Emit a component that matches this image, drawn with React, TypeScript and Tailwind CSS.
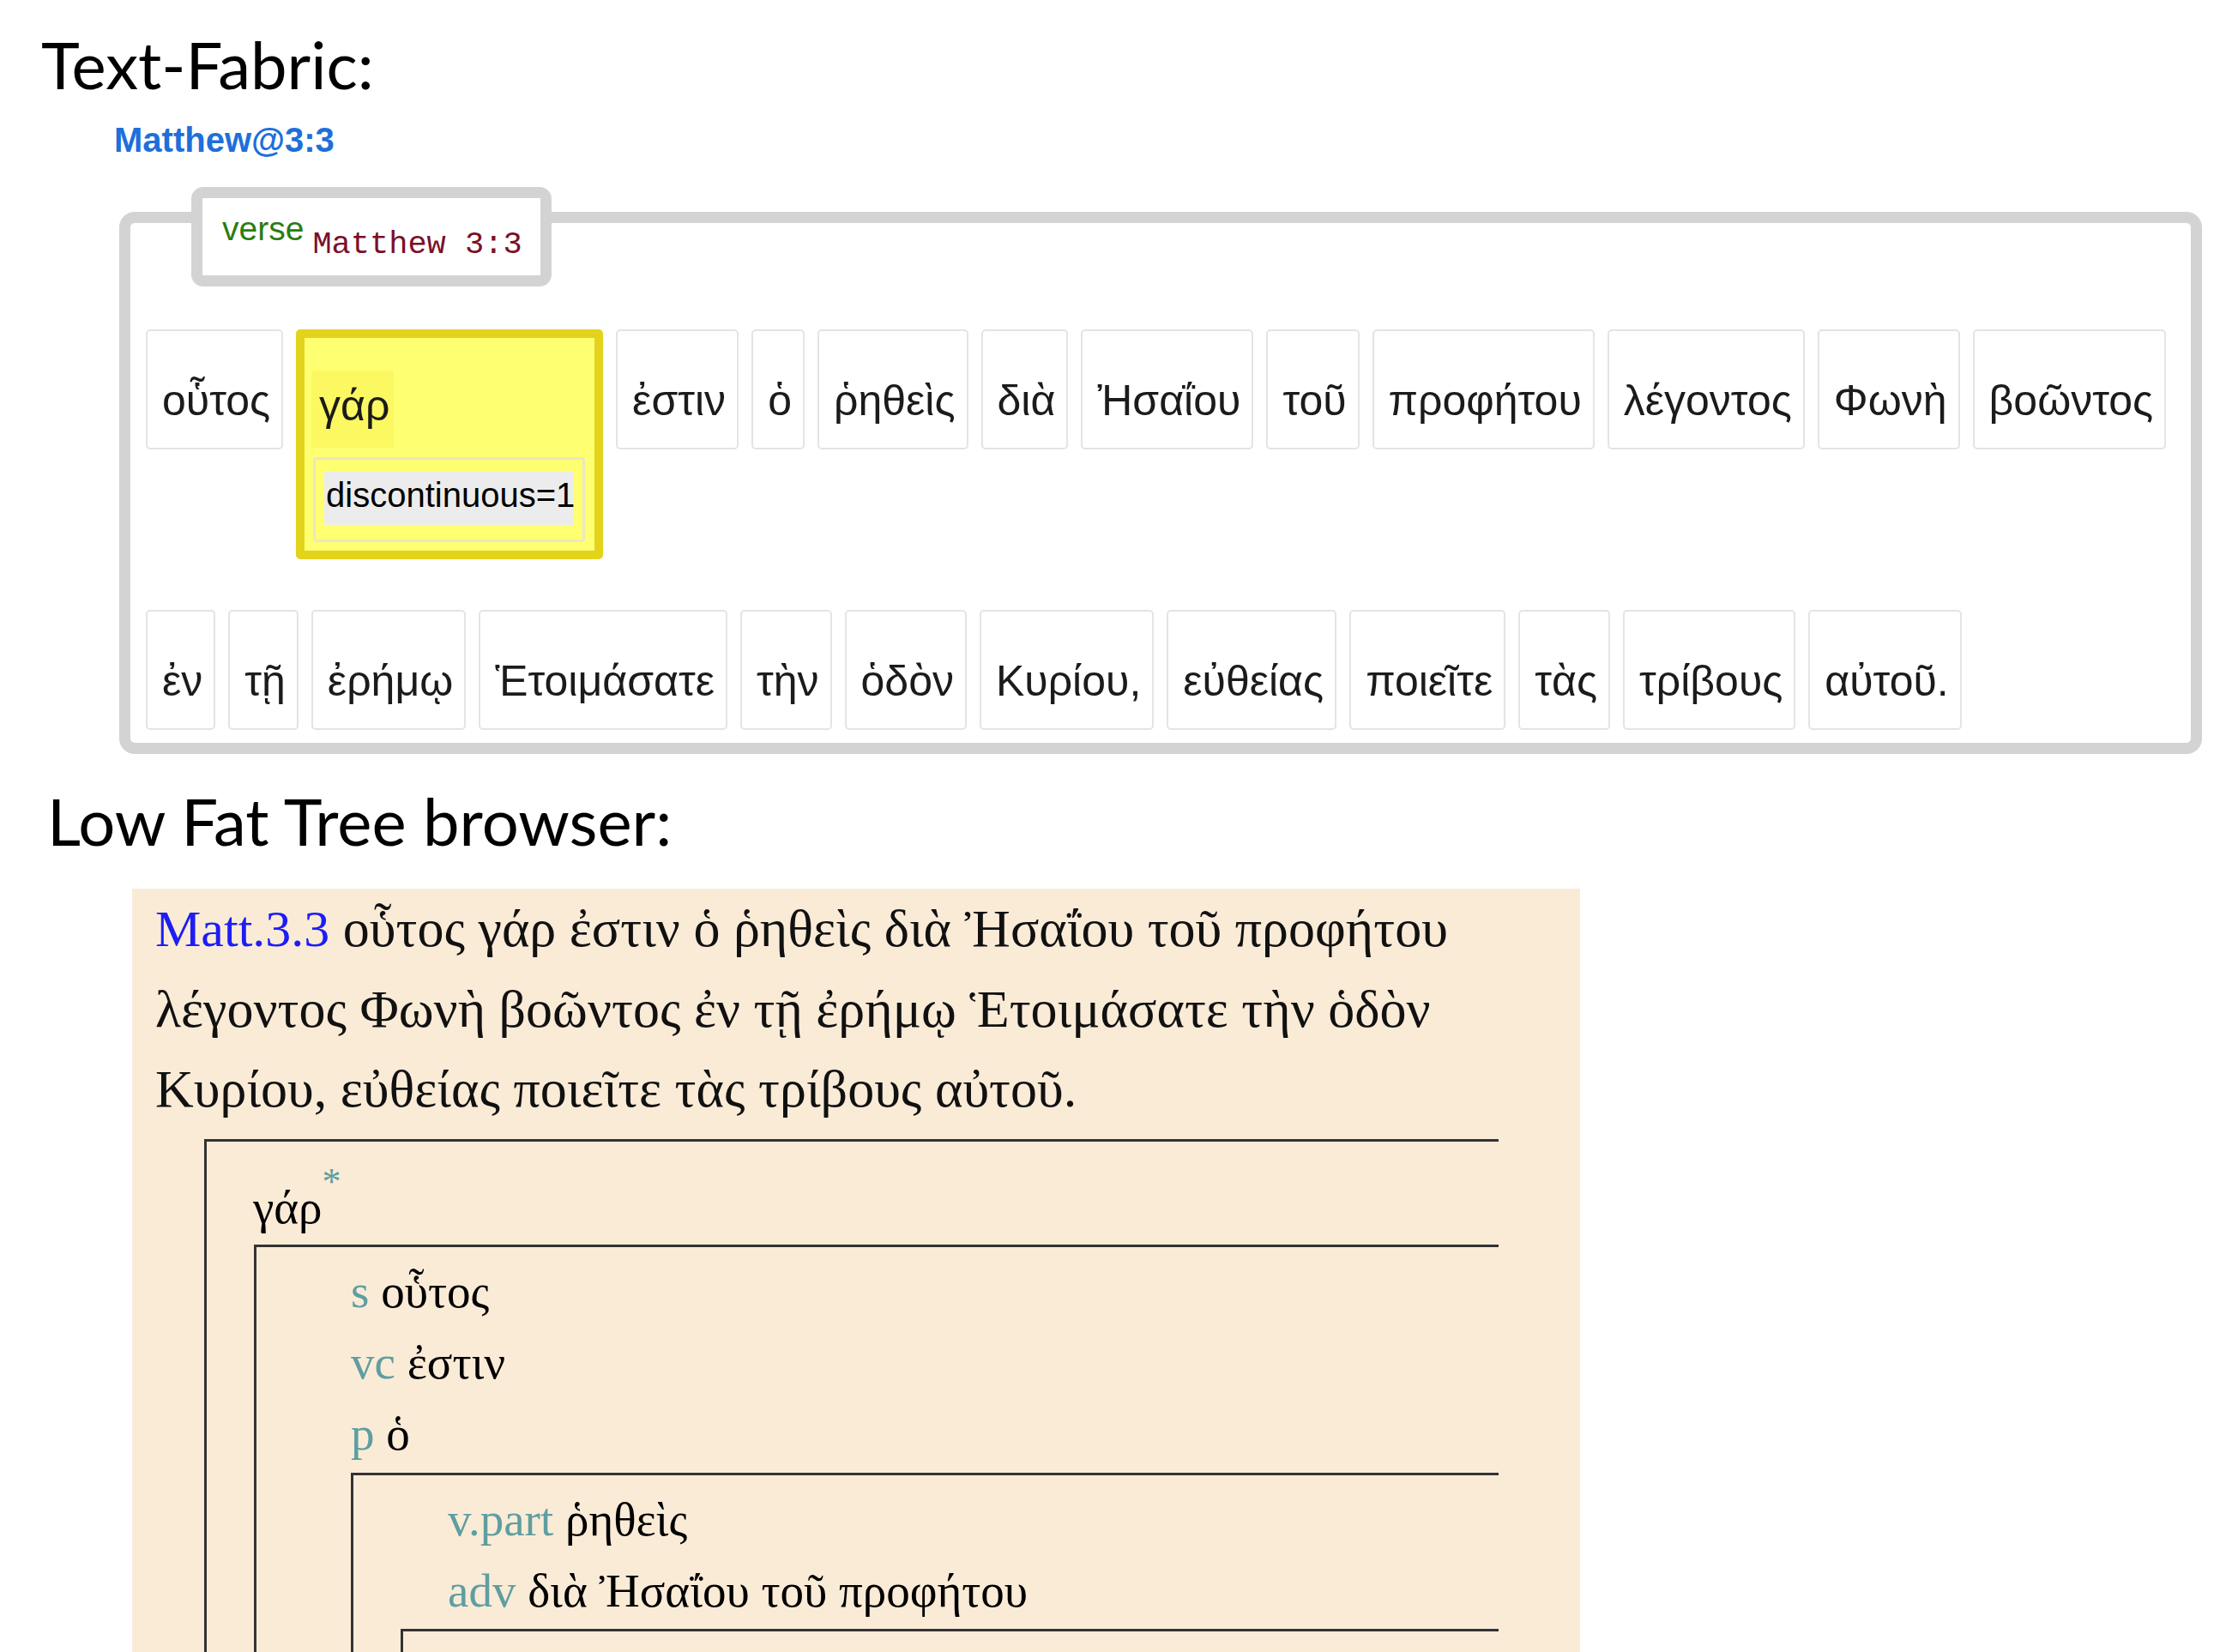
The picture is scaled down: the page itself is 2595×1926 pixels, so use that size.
const row1 = ["οὗτος", "γάρ", "ἐστιν", "ὁ", "ῥηθεὶς", "διὰ", "Ἠσαΐου", "τοῦ", "προφήτου", "λέγοντος", "Φωνὴ", "βοῶντος"];
const row2 = ["ἐν", "τῇ", "ἐρήμῳ", "Ἑτοιμάσατε", "τὴν", "ὁδὸν", "Κυρίου,", "εὐθείας", "ποιεῖτε", "τὰς", "τρίβους", "αὐτοῦ."];

function Word({ w }: { w: string }) {
  return (
    <div className="shrink-0 h-[140px] rounded-[5px] border-2 border-[#e4e4e4] bg-white pl-[17px] pr-[13px] pt-[56px] text-[50px] leading-none text-[#1b1b1b] whitespace-nowrap">
      {w}
    </div>
  );
}

function Gar() {
  return (
    <div className="shrink-0 w-[358px] rounded-[5px] border-[10px] border-[#e3d31c] bg-[#ffff72] pl-[8px] pt-[38px] pb-[10px]">
      <div className="w-fit bg-[#fcf862] pl-[9px] pr-[5px] pt-[16px] pb-[24px] text-[50px] leading-none text-[#1b1b1b]">γάρ</div>
      <div className="mt-[11px] ml-[2px] w-[317px] rounded-[4px] border-[3px] border-[#ebe7c4] px-[10px] pt-[14px] pb-[17px]">
        <div className="bg-[#ececec] pl-[2px] pt-[7px] pb-[15px] text-[40px] leading-none text-black whitespace-nowrap">discontinuous=1</div>
      </div>
    </div>
  );
}

function Row({ label, word }: { label: string; word: string }) {
  return (
    <div className="h-[83px] leading-[83px] whitespace-nowrap">
      <span className="text-[#5f9ea0]">{label}</span> <span className="text-black">{word}</span>
    </div>
  );
}

export default function App() {
  return (
    <div className="w-[2595px] h-[1926px] overflow-hidden bg-white font-['Lato',sans-serif]">
      <h1 className="pl-[48px] pt-[37px] text-[76px] leading-none text-black">Text-Fabric:</h1>

      <div className="ml-[133px] mt-[30px] text-[40px] leading-none font-bold text-[#1e6fd9] font-['Liberation_Sans',sans-serif]">
        Matthew@3:3
      </div>

      {/* verse box */}
      <div className="ml-[139px] mt-[64px] w-[2428px] rounded-[18px] border-[13px] border-[#d3d3d3] pb-[15px] font-['Liberation_Sans','Noto_Sans',sans-serif]">
        <div className="-mt-[42px] ml-[71px] w-[420px] h-[116px] rounded-[14px] border-[13px] border-[#d3d3d3] bg-white flex items-start pl-[23px]">
          <span className="mt-[16px] text-[39px] leading-none text-[#2a7d12]">verse</span>
          <span className="ml-[10px] mt-[36px] text-[37px] leading-none text-[#7b1028] font-['Liberation_Mono',monospace]">Matthew 3:3</span>
        </div>

        <div className="mt-[50px] pl-[18px] flex items-start gap-[15px]">
          {row1.map((w) => (w === "γάρ" ? <Gar key={w} /> : <Word key={w} w={w} />))}
        </div>
        <div className="mt-[59px] pl-[18px] flex items-start gap-[15px]">
          {row2.map((w) => (
            <Word key={w} w={w} />
          ))}
        </div>
      </div>

      <h1 className="pl-[55px] mt-[40px] text-[76px] leading-none text-black">Low Fat Tree browser:</h1>

      {/* low fat tree panel */}
      <div className="ml-[154px] mt-[41px] w-[1688px] h-[900px] bg-[#faebd7] font-['Liberation_Serif','DejaVu_Serif',serif] text-[#111]">
        <p className="pl-[27px] text-[62px] leading-[93px] whitespace-nowrap">
          <span className="text-[60px] text-[#1d1df5]">Matt.3.3</span> οὗτος γάρ ἐστιν ὁ ῥηθεὶς διὰ Ἠσαΐου τοῦ προφήτου
          <br />
          λέγοντος Φωνὴ βοῶντος ἐν τῇ ἐρήμῳ Ἑτοιμάσατε τὴν ὁδὸν
          <br />
          Κυρίου, εὐθείας ποιεῖτε τὰς τρίβους αὐτοῦ.
        </p>

        <div className="ml-[84px] mr-[95px] mt-[12px] border-t-[3px] border-l-[3px] border-[#333] text-[55px]">
          <div className="pl-[54px] pt-[35px] h-[118px] leading-[83px] text-black">
            γάρ<sup className="-top-[34px] text-[44px] text-[#5f9ea0]">*</sup>
          </div>
          <div className="ml-[55px] mt-[2px] border-t-[3px] border-l-[3px] border-[#333]">
            <div className="pl-[110px] pt-[10px]">
              <Row label="s" word="οὗτος" />
              <Row label="vc" word="ἐστιν" />
              <Row label="p" word="ὁ" />
            </div>
            <div className="ml-[110px] mt-[4px] border-t-[3px] border-l-[3px] border-[#333]">
              <div className="pl-[110px] pt-[10px]">
                <Row label="v.part" word="ῥηθεὶς" />
                <Row label="adv" word="διὰ Ἠσαΐου τοῦ προφήτου" />
              </div>
              <div className="ml-[55px] mt-[3px] h-[120px] border-t-[3px] border-l-[3px] border-[#333]" />
            </div>
          </div>
        </div>
      </div>
    </div>
  );
}
